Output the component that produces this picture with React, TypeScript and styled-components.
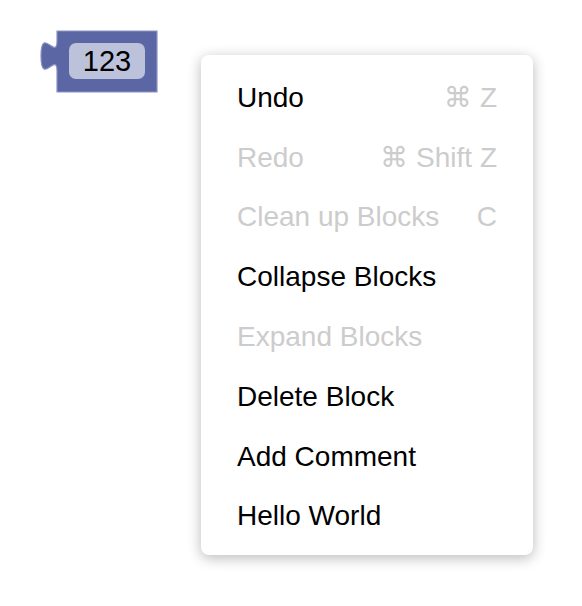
import React from 'react';
import styled, { createGlobalStyle } from 'styled-components';

const GlobalStyle = createGlobalStyle`
  html, body {
    margin: 0;
    padding: 0;
    background: #fff;
  }
  body {
    font-family: "Liberation Sans", Arial, "DejaVu Sans", sans-serif;
  }
`;

const Workspace = styled.div`
  position: relative;
  width: 582px;
  height: 606px;
  overflow: hidden;
  background: #fff;
`;

const Block = styled.div`
  position: absolute;
  left: 40px;
  top: 31px;
  width: 117px;
  height: 61px;
  box-sizing: border-box;
  padding: 12px 0 0 29px;
  display: flex;
  align-items: flex-start;
`;

const BlockShape = styled.svg`
  position: absolute;
  left: 0;
  top: 0;
  z-index: 0;
  overflow: visible;
`;

const Field = styled.div`
  position: relative;
  z-index: 1;
  width: 76px;
  height: 36px;
  border-radius: 7px;
  background: #bdc2db;
  color: #000;
  font-size: 29px;
  line-height: 37px;
  text-align: center;
`;

const Menu = styled.div`
  position: absolute;
  left: 201px;
  top: 55px;
  width: 332px;
  box-sizing: border-box;
  padding: 13px 0 9px;
  background: #fff;
  border-radius: 8px;
  box-shadow: 0 3px 14px rgba(0, 0, 0, 0.28);
`;

const MenuItem = styled.div<{ $disabled?: boolean }>`
  display: flex;
  justify-content: space-between;
  align-items: center;
  height: 59.8px;
  padding: 0 36px;
  font-size: 28px;
  color: ${p => (p.$disabled ? '#cccccc' : '#000')};
  white-space: nowrap;
  cursor: ${p => (p.$disabled ? 'default' : 'pointer')};
`;

const Shortcut = styled.span`
  color: #cccccc;
  font-family: "Liberation Sans", "DejaVu Sans", sans-serif;
`;

interface Item {
  label: string;
  shortcut?: string;
  disabled?: boolean;
}

const items: Item[] = [
  { label: 'Undo', shortcut: '⌘ Z' },
  { label: 'Redo', shortcut: '⌘ Shift Z', disabled: true },
  { label: 'Clean up Blocks', shortcut: 'C', disabled: true },
  { label: 'Collapse Blocks' },
  { label: 'Expand Blocks', disabled: true },
  { label: 'Delete Block' },
  { label: 'Add Comment' },
  { label: 'Hello World' },
];

const App: React.FC = () => {
  return (
    <>
      <GlobalStyle />
      <Workspace>
        <Block>
          <BlockShape width="117" height="61" viewBox="-17 0 117 61">
            <path
              d="M0,0 H100 V61 H0 V40 c0,-20 -16,16 -16,-15 s16,5 16,-15 Z"
              fill="#5b67a5"
              stroke="#8c93c3"
              strokeWidth="1.2"
            />
          </BlockShape>
          <Field>123</Field>
        </Block>
        <Menu>
          {items.map(item => (
            <MenuItem key={item.label} $disabled={item.disabled}>
              <span>{item.label}</span>
              {item.shortcut && <Shortcut>{item.shortcut}</Shortcut>}
            </MenuItem>
          ))}
        </Menu>
      </Workspace>
    </>
  );
};

export default App;
